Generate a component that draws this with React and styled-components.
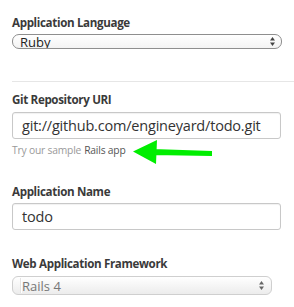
import React from "react";
import styled, { createGlobalStyle } from "styled-components";

const Global = createGlobalStyle`
  html, body { margin: 0; padding: 0; background: #ffffff; }
  body { font-family: "Open Sans", "DejaVu Sans", sans-serif; color: #333; }
  * { box-sizing: border-box; }
`;

const Page = styled.div`
  width: 294px;
  height: 307px;
  overflow: hidden;
  padding: 15px 0 0 12px;
  display: flex;
  flex-direction: column;
`;

const Section = styled.div`
  display: flex;
  flex-direction: column;
  padding-right: 12px;
  margin-top: ${(p) => p.$mt || 0}px;
`;

const Label = styled.div`
  font-size: 11.6px;
  line-height: 16px;
  font-weight: 700;
  letter-spacing: -0.35px;
  color: #3a3a3a;
  margin-bottom: ${(p) => p.$mb || 3}px;
`;

const Divider = styled.div`
  height: 1px;
  background: #e6e6e6;
  margin-top: 32px;
`;

const SelectBox = styled.div`
  position: relative;
  display: flex;
  align-items: center;
  justify-content: space-between;
  width: ${(p) => p.$w}px;
  height: ${(p) => p.$h}px;
  border-radius: ${(p) => p.$r}px;
  border: 1px solid ${(p) => p.$border};
  background: ${(p) => p.$bg};
  padding: 0 ${(p) => p.$pr}px 0 ${(p) => p.$pl}px;
  font-size: 13px;
  color: ${(p) => p.$color};
  overflow: hidden;
`;

const NativeLine = styled.span`
  position: absolute;
  left: 8px;
  top: 1px;
  bottom: 1px;
  width: 1px;
  background: #ffffff;
  box-shadow: -1px 0 0 #e4e4e4;
`;

const Input = styled.div`
  width: 269px;
  height: 27px;
  border: 1px solid #c8c8c8;
  border-radius: 3px;
  box-shadow: inset 0 1px 1px rgba(0, 0, 0, 0.06);
  display: flex;
  align-items: center;
  padding-left: 9px;
  font-size: 14.5px;
  letter-spacing: -0.2px;
  color: #333;
  white-space: nowrap;
`;

const Help = styled.div`
  display: flex;
  align-items: center;
  height: 12px;
  margin-top: 5px;
  font-size: 10.3px;
  letter-spacing: -0.2px;
  color: #9a9a9a;
  white-space: nowrap;
`;

const Strong = styled.span`
  color: #555;
  margin-left: 3px;
`;

const ArrowSvg = styled.svg`
  flex: none;
  margin-left: 7px;
  margin-top: 3px;
`;

const Updown = ({ color = "#555" }) => (
  <svg width="5" height="9" viewBox="0 0 5 9">
    <path d="M2.5 0 L5 3.5 L0 3.5 Z" fill={color} />
    <path d="M2.5 9 L5 5.5 L0 5.5 Z" fill={color} />
  </svg>
);

export default function App() {
  return (
    <>
      <Global />
      <Page>
        <Section>
          <Label>Application Language</Label>
          <SelectBox
            $w={270}
            $h={15}
            $r={7}
            $border="#8e8e8e"
            $bg="linear-gradient(#ffffff, #f3f3f3)"
            $pl={7}
            $pr={6}
            $color="#222"
          >
            <span>Ruby</span>
            <Updown color="#444" />
          </SelectBox>
        </Section>
        <Divider />
        <Section $mt={10}>
          <Label $mb={4}>Git Repository URI</Label>
          <Input>git://github.com/engineyard/todo.git</Input>
          <Help>
            Try our sample<Strong>Rails app</Strong>
            <ArrowSvg width="82" height="26" viewBox="0 0 82 26">
              <path
                d="M0 12.5 L24 1 L23 25 Z M20 10 L79 12 L79 17 L20 16 Z"
                fill="#00ee00"
              />
            </ArrowSvg>
          </Help>
        </Section>
        <Section $mt={28}>
          <Label $mb={3}>Application Name</Label>
          <Input>todo</Input>
        </Section>
        <Section $mt={26}>
          <Label $mb={4}>Web Application Framework</Label>
          <SelectBox
            $w={260}
            $h={19}
            $r={6}
            $border="#cfcfcf"
            $bg="linear-gradient(#ffffff, #ececec)"
            $pl={9}
            $pr={7}
            $color="#777"
          >
            <NativeLine />
            <span>Rails 4</span>
            <Updown color="#666" />
          </SelectBox>
        </Section>
      </Page>
    </>
  );
}
